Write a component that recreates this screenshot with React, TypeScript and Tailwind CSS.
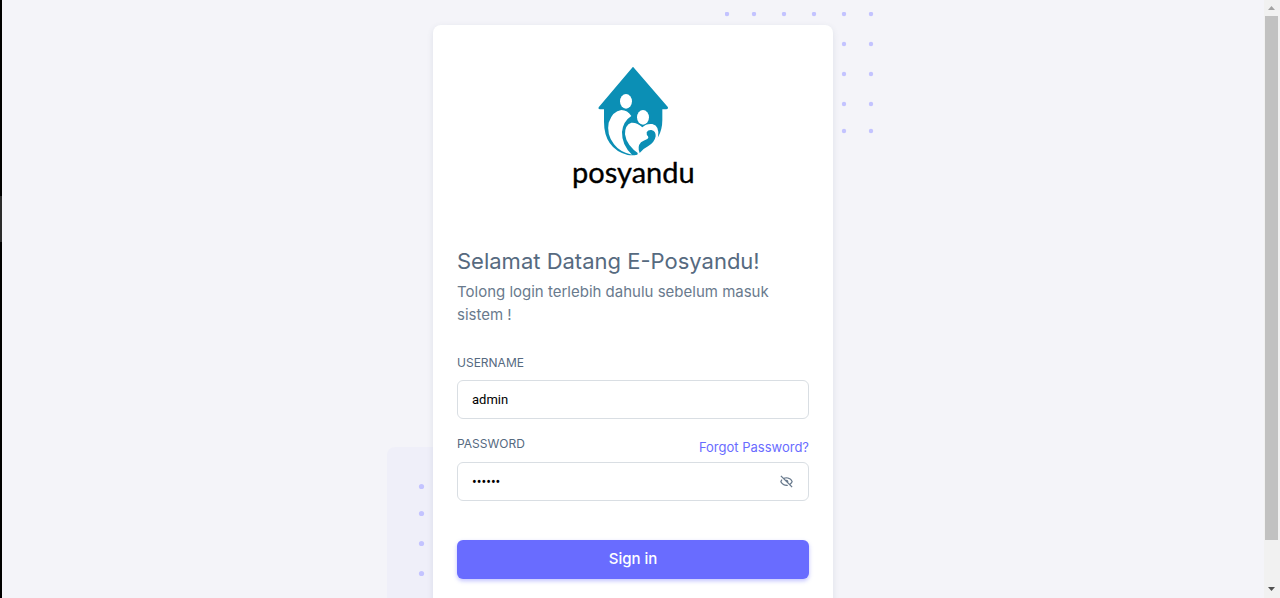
import { useState } from "react";
import { BiHide } from "react-icons/bi";

const topDots = [
  [2, 2], [29, 2], [59, 2], [89, 2], [119, 2], [146, 2],
  [119, 32], [146, 32], [119, 62], [146, 62], [119, 92], [146, 92], [119, 119], [146, 119],
];
const bottomDots = [39, 66, 96, 126];

function Logo() {
  return (
    <svg role="img" aria-label="posyandu" width="146" height="150" viewBox="0 0 438 450">
      <path
        fill="#0b8fb5"
        d="M219 35 L324 157 Q325 163 319 163 L307 163 L307 195 Q307 224 294 247 L245 250 L232 299 Q218 302 203 300 Q132 280 132 200 L132 163 L119 163 Q113 162 116 157 Z"
      />
      <path fill="#fff" d="M214 183 Q203 165 184 165 Q158 168 146 203 Q139 238 162 268 Q181 293 216 299 Q185 270 186 231 Q189 199 214 183 Z" />
      <ellipse cx="198" cy="139" rx="18" ry="22" fill="#fff" />
      <ellipse cx="249" cy="187" rx="18" ry="22" fill="#fff" />
      <path fill="#fff" d="M247 217 Q233 202 214 203 Q194 210 195 238 Q199 271 238 298 L260 285 L294 247 Q300 213 277 207 Q258 205 247 217 Z" />
      <path fill="#0b8fb5" d="M239 294 Q231 275 243 262 Q252 256 262 252 Q267 249 264 244 Q259 240 260 232 Q264 224 274 225 Q288 228 287 244 Q284 262 264 274 Q248 282 239 294 Z" />
      <text x="36" y="384" fontSize="87" fontFamily="Lato, sans-serif" fill="#000" stroke="#000" strokeWidth="1">
        posyandu
      </text>
    </svg>
  );
}

export default function App() {
  const [username, setUsername] = useState("admin");
  const [password, setPassword] = useState("123456");
  const [visible, setVisible] = useState(false);

  return (
    <div className="flex h-screen overflow-hidden bg-[#f4f4f9] font-[Inter,sans-serif] text-[15px] text-[#697a8d]">
      <div className="flex w-[2px] shrink-0 flex-col bg-black">
        <div className="mt-[196px] h-[46px] bg-[#2b2b2b]" />
      </div>

      <main className="flex min-w-0 flex-1 items-start justify-center pt-[25px]">
        <div className="relative w-full max-w-[400px]">
          <svg aria-hidden="true" className="absolute -top-[13px] left-[292px]" width="150" height="124" fill="#c3c3ff">
            {topDots.map(([x, y]) => (
              <circle key={`${x}-${y}`} cx={x} cy={y} r="2.2" />
            ))}
          </svg>
          <div aria-hidden="true" className="absolute top-[422px] -left-[46px] h-[200px] w-[148px] rounded-lg bg-[#efeff9]">
            <svg width="148" height="148" fill="#c3c3ff">
              {bottomDots.map((y) => (
                <circle key={y} cx="34.5" cy={y + 0.5} r="2.6" />
              ))}
            </svg>
          </div>

          <section className="relative rounded-lg bg-white px-6 pt-[30px] pb-12 shadow-[0_2px_6px_rgba(67,89,113,0.12)]">
            <div className="flex justify-center">
              <Logo />
            </div>
            <h1 className="mt-[42px] text-[22px] leading-7 font-normal text-[#566a7f]">Selamat Datang E-Posyandu!</h1>
            <p className="mt-[5px] leading-[23px]">Tolong login terlebih dahulu sebelum masuk sistem !</p>

            <form className="mt-7" onSubmit={(e) => e.preventDefault()}>
              <label htmlFor="username" className="block text-xs leading-[18px] text-[#566a7f] uppercase">
                Username
              </label>
              <input
                id="username"
                type="text"
                value={username}
                onChange={(e) => setUsername(e.target.value)}
                className="mt-2 block h-[39px] w-full rounded-md border border-[#d9dee3] bg-white px-[14px] font-[Roboto,sans-serif] text-[13px] text-black outline-none focus:border-[#696cff]"
              />

              <div className="mt-4 flex justify-between">
                <label htmlFor="password" className="text-xs leading-[18px] text-[#566a7f] uppercase">
                  Password
                </label>
                <a href="#forgot" className="mt-[2px] text-[13px] leading-5 text-[#696cff]">
                  Forgot Password?
                </a>
              </div>
              <div className="mt-[5px] flex h-[39px] items-center rounded-md border border-[#d9dee3] bg-white focus-within:border-[#696cff]">
                <input
                  id="password"
                  type={visible ? "text" : "password"}
                  value={password}
                  onChange={(e) => setPassword(e.target.value)}
                  className="min-w-0 flex-1 bg-transparent pl-[14px] font-[Roboto,sans-serif] text-sm text-black outline-none"
                />
                <button type="button" aria-label="Show password" onClick={() => setVisible(!visible)} className="px-[14px]">
                  <BiHide size={15} />
                </button>
              </div>

              <button
                type="submit"
                className="mt-[39px] h-[39px] w-full rounded-md bg-[#696cff] font-medium text-white shadow-[0_2px_4px_rgba(105,108,255,0.4)]"
              >
                Sign in
              </button>
            </form>
          </section>
        </div>
      </main>

      <div aria-hidden="true" className="flex w-4 shrink-0 flex-col bg-[#f1f1f1]">
        <svg width="16" height="16" className="shrink-0">
          <path d="M4 10 L7.500 6 L11 10 Z" fill="#a3a3a3" />
        </svg>
        <div className="ml-px w-[13px] flex-1 bg-[#c1c1c1]" />
        <svg width="16" height="58" className="shrink-0">
          <path d="M4 47 L11 47 L7.500 51 Z" fill="#505050" />
        </svg>
      </div>
    </div>
  );
}
